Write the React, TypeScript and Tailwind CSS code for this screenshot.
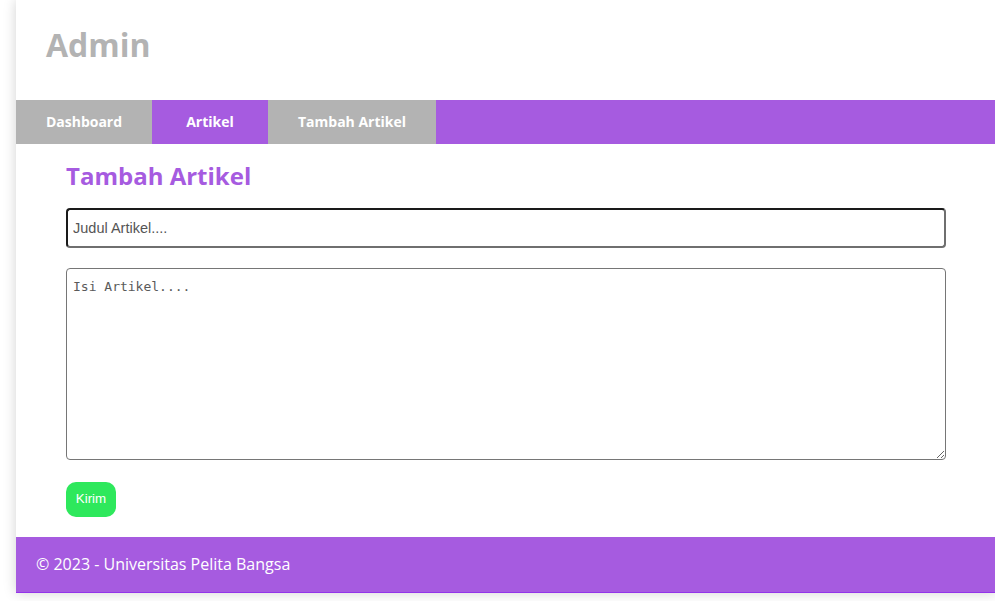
import React from 'react';

const navItems = [
  { label: 'Dashboard', width: 'w-[136px]', active: false },
  { label: 'Artikel', width: 'w-[116px]', active: true },
  { label: 'Tambah Artikel', width: 'w-[168px]', active: false },
];

export default function App() {
  return (
    <div className="min-h-[601px] bg-white pt-0 font-['Open_Sans',sans-serif]">
      <div className="ml-[16px] w-[980px] bg-white shadow-[0_0_12px_rgba(0,0,0,0.18)]">
        <header className="h-[100px] pl-[30px] pt-[23px]">
          <h1 className="text-[32px] font-bold leading-[1.362] text-[#b3b3b3]">Admin</h1>
        </header>

        <nav className="flex h-[44px] bg-[#a65be0]">
          {navItems.map((item) => (
            <a
              key={item.label}
              href="#"
              className={`flex ${item.width} items-center justify-center pb-[2px] text-[14px] font-bold text-white ${
                item.active ? 'bg-[#a65be0]' : 'bg-[#b3b3b3]'
              }`}
            >
              {item.label}
            </a>
          ))}
        </nav>

        <section className="px-[50px] pt-[16px] pb-[20px]">
          <h2 className="text-[24px] font-bold leading-[1.362] text-[#a65be0]">Tambah Artikel</h2>
          <form className="mt-[15px] flex flex-col" onSubmit={(e) => e.preventDefault()}>
            <input
              type="text"
              placeholder="Judul Artikel...."
              className="h-[40px] w-full rounded-[4px] border-2 border-t-[#1a1a1a] border-l-[#1a1a1a] border-r-[#6f6f6f] border-b-[#6f6f6f] px-[5px] font-['Liberation_Sans',Arial,sans-serif] text-[14.5px] text-[#333] outline-none placeholder:text-[#555]"
            />
            <textarea
              placeholder="Isi Artikel...."
              className="mt-[20px] h-[192px] w-full rounded-[4px] border border-[#767676] px-[6px] py-[10px] font-['DejaVu_Sans_Mono',monospace] text-[13px] leading-[1.2] text-[#333] outline-none placeholder:text-[#5a5a5a]"
            />
            <div className="mt-[22px]">
              <button
                type="submit"
                className="h-[35px] w-[50px] rounded-[10px] bg-[#2ee85c] font-['Liberation_Sans',Arial,sans-serif] text-[13.33px] text-white"
              >
                Kirim
              </button>
            </div>
          </form>
        </section>

        <footer className="flex h-[56px] items-center border-b border-[#9333ea] bg-[#a65be0] px-[20px] text-[16px] text-white">
          © 2023 - Universitas Pelita Bangsa
        </footer>
      </div>
    </div>
  );
}
